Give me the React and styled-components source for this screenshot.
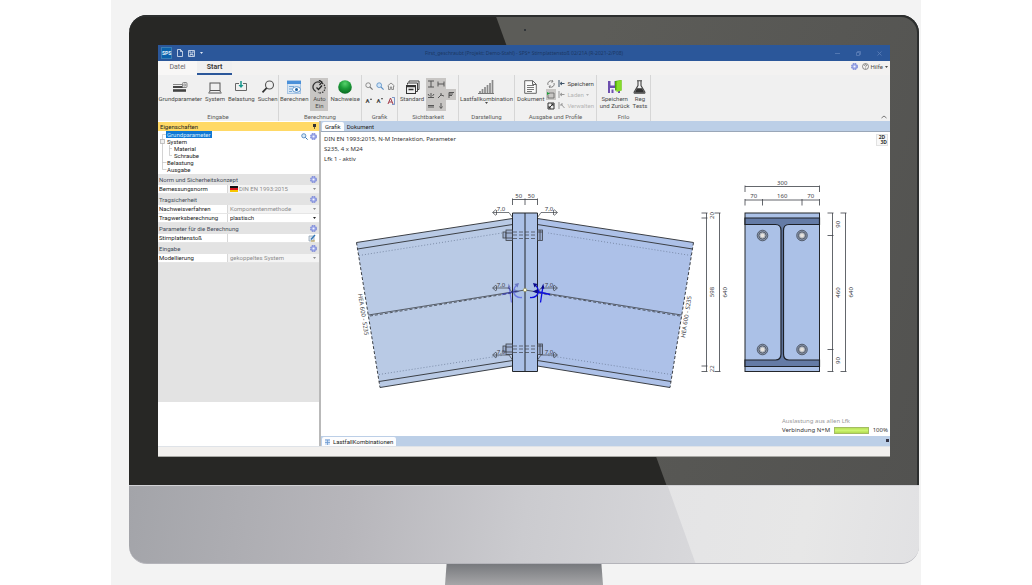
import React from 'react';
import styled, { createGlobalStyle } from 'styled-components';

const GlobalStyle = createGlobalStyle`
  * {
    box-sizing: border-box;
  }
  body {
    margin: 0;
    background: #fff;
    font-family: Roboto, 'Liberation Sans', sans-serif;
    font-size: 6px;
    line-height: 8px;
    color: #4a4a4a;
  }
  button,
  input,
  select {
    font: inherit;
    color: inherit;
    margin: 0;
    padding: 0;
    border: 0;
    border-radius: 0;
    background: none;
  }
  svg {
    display: block;
    flex: none;
  }
  ul {
    list-style: none;
    margin: 0;
    padding: 0;
  }
`;

/* monitor */

const PageStyles = styled.main`
  min-height: 100vh;
  padding: 0 111px;
  overflow: hidden;
`;

const Stage = styled.div`
  min-height: 100vh;
  padding: 15px 2px 0 18px;
  background: #f3f3f3;
`;

const Bezel = styled.div`
  position: relative;
  padding: 30px 29px 28px;
  border-radius: 18px 18px 0 0;
  background: #272725;
  box-shadow: inset -1px 1px 0 1px #2c2e2e;

  &::before {
    content: '';
    position: absolute;
    inset: 2px 2px 0 0;
    border-radius: 0 16px 0 0;
    background: linear-gradient(110deg, #5c5c58 50%, #525250);
    clip-path: polygon(46.6% 0, 100% 0, 100% 100%, 68.2% 100%);
  }
`;

const Camera = styled.span`
  position: absolute;
  top: 14px;
  left: 50%;
  width: 2px;
  height: 2px;
  border-radius: 50%;
  background: #252a30;
`;

const Chin = styled.div`
  position: relative;
  height: 79px;
  border-radius: 0 0 18px 18px;
  border-top: 1px solid #d2d2d6;
  border-bottom: 1px solid #b4b4ba;
  background: linear-gradient(98deg, #a3a4a9, #b7b6bb 28%, #cbcbcf 50%, #d8d8db 72%);
  overflow: hidden;

  &::before {
    content: '';
    position: absolute;
    inset: 0;
    background: linear-gradient(100deg, #e3e3e5 60%, #e7e7e7 85%, #e1e1e3);
    clip-path: polygon(68.2% 0, 100% 0, 100% 100%, 71.7% 100%);
  }
`;

const Stand = styled.div`
  width: 20%;
  height: 21px;
  margin: 0 auto;
  background: linear-gradient(#77797d, #a6a6a8);
  clip-path: polygon(1% 0, 99% 0, 100% 100%, 0 100%);
`;

const Screen = styled.div`
  position: relative;
  display: flex;
  flex-direction: column;
  background: #f0f0f0;
`;

/* title bar and tabs */

const TitleBar = styled.header`
  display: grid;
  grid-template-columns: 1fr auto 1fr;
  align-items: center;
  height: 16px;
  background: #2b579a;
`;

const Title = styled.h1`
  margin: 0;
  font-family: 'Noto Sans', sans-serif;
  font-size: 5px;
  font-weight: 400;
  color: #1c3764;
  white-space: nowrap;
`;

const TitleTools = styled.div`
  display: flex;
  align-items: center;
  justify-content: ${({ $end }) => ($end ? 'flex-end' : 'flex-start')};
  gap: ${({ $end }) => ($end ? '16px' : '5px')};
  padding: ${({ $end }) => ($end ? '0 8px' : '0 3px')};
  color: ${({ $end }) => ($end ? '#5d7fb8' : '#dfe7f4')};
`;

const IconButton = styled.button`
  display: flex;
  align-items: center;
  justify-content: center;
`;

const AppBadge = styled.span`
  padding: 1px 0;
  border: 1px solid #3b7fb5;
  background: #0c62ab;
  color: #e8f2fb;
  font-size: 5px;
  font-weight: 700;
  line-height: 8px;
`;

const TabRow = styled.nav`
  display: flex;
  height: 14px;
  background: #f3f2f1;
`;

const RibbonTab = styled.button`
  width: ${({ $active }) => ($active ? '35px' : '39px')};
  border-bottom: 2px solid ${({ $active }) => ($active ? '#2b579a' : 'transparent')};
  background: ${({ $active }) => ($active ? '#f0f0f0' : '#f8f7f6')};
  font-size: 7px;
  line-height: 12px;
  font-weight: ${({ $active }) => ($active ? 700 : 400)};
  color: ${({ $active }) => ($active ? '#3c3c3c' : '#6a6a6a')};
`;

const HelpArea = styled.div`
  display: flex;
  align-items: center;
  gap: 4px;
  margin-left: auto;
  padding: 0 2px 3px 0;
`;

const HelpButton = styled(IconButton)`
  gap: 2px;
`;

/* ribbon */

const Ribbon = styled.div`
  display: flex;
  height: 46px;
  background: #f0f0f0;
`;

const GroupBox = styled.section`
  display: flex;
  flex-direction: column;
  flex: 0 0 ${({ $width }) => $width}px;
  border-right: 1px solid #d6d6d6;

  h2 {
    margin: 0;
    font-size: 6px;
    font-weight: 400;
    line-height: 9px;
    text-align: center;
    white-space: nowrap;
    color: #5c5c5c;
  }
`;

const GroupBody = styled.div`
  display: flex;
  flex: 1;
  align-items: flex-start;
  justify-content: center;
  gap: ${({ $gap }) => $gap || 3}px;
  padding-top: 3px;
`;

const BigButton = styled.button`
  display: flex;
  flex-direction: column;
  align-items: center;
  min-width: ${({ $active }) => ($active ? '18px' : '0')};
  min-height: 33px;
  padding-top: 2px;
  background: ${({ $active }) => ($active ? '#c8c6c4' : 'none')};
  line-height: 7px;
  white-space: nowrap;

  svg {
    margin-bottom: 1px;
  }
`;

const SmallGrid = styled.div`
  display: grid;
  grid-template-columns: repeat(${({ $cols }) => $cols}, ${({ $size }) => $size || 10}px);
  grid-auto-rows: ${({ $row }) => $row || 11}px;
`;

const Toggle = styled(IconButton)`
  background: ${({ $active }) => ($active ? '#c8c6c4' : 'none')};
`;

const FontButton = styled(IconButton)`
  align-items: center;
  font-weight: 700;
  color: #444;
`;

const SideButton = styled.button`
  display: flex;
  align-items: center;
  gap: 2px;
  height: 11px;
  white-space: nowrap;
  color: ${({ disabled }) => (disabled ? '#b5b5b5' : '#444')};
`;

const Collapse = styled(IconButton)`
  align-self: flex-end;
  margin: 0 3px 2px auto;
`;

/* properties panel */

const Workspace = styled.div`
  display: flex;
`;

const Panel = styled.aside`
  display: flex;
  flex-direction: column;
  flex: 0 0 161px;
  padding-top: 1px;
  background: #fff;
  color: #222;
`;

const PanelHeader = styled.div`
  display: flex;
  align-items: center;
  justify-content: space-between;
  height: 9px;
  padding: 0 3px 0 2px;
  background: #ffd966;
`;

const TreeBox = styled.div`
  display: flex;
  justify-content: space-between;
  height: 43px;
  padding: 0 2px;
`;

const TreeLines = styled.svg`
  margin-right: -12px;
`;

const TreeList = styled.ul`
  flex: 1;

  li {
    display: flex;
    align-items: center;
    height: 7px;
  }
`;

const TreeItem = styled.button`
  margin-left: ${({ $level }) => ($level ? 13 : 6)}px;
  padding: 0 1px;
  line-height: 7px;
  background: ${({ $active }) => ($active ? '#0f78d4' : 'none')};
  color: ${({ $active }) => ($active ? '#d6e9fb' : '#222')};
`;

const TreeTools = styled.div`
  display: flex;
  gap: 2px;
  padding-top: 2px;
  align-items: flex-start;
`;

const Properties = styled.div`
  flex: 1;
  background: #e3e3e3;
`;

const SectionHeader = styled.div`
  display: flex;
  align-items: center;
  justify-content: space-between;
  height: 11px;
  padding: 0 2px 0 1px;
  color: #444b58;
`;

const PropertyRow = styled.div`
  display: grid;
  grid-template-columns: 69px 1fr;
  height: 9px;
  background: #fff;
  border-bottom: 1px solid #e6e6e6;

  label {
    padding-left: 1px;
    white-space: nowrap;
  }
`;

const FieldBox = styled.div`
  display: flex;
  align-items: center;
  gap: 1px;
  min-width: 0;
  padding: 0 3px 0 2px;
  border-left: 1px solid #d8d8d8;
  background: ${({ $off }) => ($off ? '#f4f4f4' : '#fff')};
  color: ${({ $off }) => ($off ? '#8d8d8d' : '#222')};

  select,
  input {
    flex: 1;
    min-width: 0;
    height: 8px;
    appearance: none;
    line-height: 8px;
    opacity: 1;
  }
`;

const PanelFooter = styled.div`
  height: 44px;
  background: #fff;
`;

/* document area */

const DocumentArea = styled.section`
  display: flex;
  flex: 1;
  flex-direction: column;
  min-width: 0;
  border-left: 2px solid #b9b9b9;
  background: #fff;
`;

const DockTabs = styled.div`
  display: flex;
  align-items: flex-end;
  justify-content: space-between;
  height: ${({ $bottom }) => ($bottom ? '10px' : '11px')};
  padding: 0 1px;
  background: #bccfe7;
  border-bottom: ${({ $bottom }) => ($bottom ? '0' : '1px solid #9aa7b8')};

  div {
    display: flex;
  }
`;

const DockTab = styled.button`
  display: flex;
  align-items: center;
  gap: 3px;
  height: 9px;
  padding: 0 3px;
  border-radius: 2px 2px 0 0;
  background: ${({ $active }) => ($active ? '#fdfdfe' : 'none')};
  color: #222;
`;

const Canvas = styled.div`
  padding: 2px 2px 1px 0;
  background: #fff;
  font-family: 'Noto Sans', sans-serif;
`;

const CanvasHead = styled.div`
  display: flex;
  justify-content: space-between;
  align-items: flex-start;
  padding-left: 3px;
  line-height: 10px;
  color: #333;

  p {
    margin: 0;
  }
`;

const ViewButton = styled.button`
  display: flex;
  flex-direction: column;
  width: 12px;
  height: 12px;
  border: 1px solid #e2e2e2;
  background: #f8f8f8;
  font-size: 5px;
  font-weight: 700;
  line-height: 5px;

  span:last-child {
    align-self: flex-end;
  }
`;

const Drawing = styled.svg`
  width: 100%;
  height: auto;
  font-size: 6px;
`;

const Usage = styled.div`
  width: 106px;
  margin-left: auto;
  line-height: 9px;
  white-space: nowrap;

  p {
    margin: 0;
    color: #9a9a9a;
  }
  div {
    display: flex;
    align-items: center;
    justify-content: space-between;
    color: #333;
  }
`;

const UsageBar = styled.span`
  width: 35px;
  height: 7px;
  border: 1px solid #a3bd62;
  background: linear-gradient(#b9e05b, #ccf46f 50%, #b2dc50);
`;

const StatusBar = styled.footer`
  height: 11px;
  border-top: 1px solid #dfe3e8;
  border-bottom: 1px solid #a8a8a4;
  background: #f2f0ee;
`;

/* icons */

const Icon = ({ w = 8, h = w, vw = w, vh = h, children, ...rest }) => (
  <svg
    width={w}
    height={h}
    viewBox={`0 0 ${vw} ${vh}`}
    fill="none"
    stroke="currentColor"
    aria-hidden="true"
    {...rest}
  >
    {children}
  </svg>
);

const Caret = () => (
  <Icon w={3} h={2}>
    <path d="M0 0h3L1.5 2z" fill="currentColor" stroke="none" />
  </Icon>
);

const Gear = ({ size = 7 }) => (
  <Icon w={size} h={size} vw={8} vh={8}>
    <circle cx="4" cy="4" r="3.2" fill="#aab5ec" stroke="#7482d6" strokeWidth="1.4" strokeDasharray="1.9 .6" />
    <circle cx="4" cy="4" r="1.5" fill="#f4f6ff" stroke="#8a97e0" strokeWidth=".7" />
  </Icon>
);

const Magnifier = ({ size = 8, color = '#777', fill = 'none' }) => (
  <Icon w={size} h={size} vw={8} vh={8} stroke={color}>
    <circle cx="3.2" cy="3.2" r="2.4" fill={fill} strokeWidth=".8" />
    <path d="M5 5l2.6 2.6" strokeWidth="1.1" />
  </Icon>
);

const ParameterIcon = () => (
  <Icon w={16} h={14}>
    <path d="M1 4.500h9" stroke="#888" />
    <path d="M1 7h11" stroke="#333" strokeWidth="1.800" />
    <path d="M1 10.500h13" stroke="#444" strokeWidth="2.600" />
    <rect x="10.500" y="2.500" width="4.500" height="5" rx="1" fill="#ddd" stroke="#888" />
    <circle cx="12.700" cy="5" r="1" stroke="#777" strokeWidth=".6" />
  </Icon>
);

const SystemIcon = () => (
  <Icon w={14} h={14}>
    <rect x="2" y="3" width="10" height="7.500" stroke="#555" />
    <path d="M.5 13h13M1 12.500l1.500-2M13 12.500l-1.500-2" stroke="#555" />
  </Icon>
);

const LoadIcon = () => (
  <Icon w={14} h={14}>
    <path d="M5 3.500H1.500v7h11v-7H9" stroke="#666" />
    <path d="M7 1v5" stroke="#18968c" strokeWidth="1.500" />
    <path d="M4.500 5h5L7 8z" fill="#18968c" stroke="none" />
  </Icon>
);

const SearchIcon = () => (
  <Icon w={14} h={14}>
    <circle cx="8.500" cy="5" r="4" stroke="#555" strokeWidth="1.100" />
    <path d="M5.600 8L1.500 12.300" stroke="#333" strokeWidth="1.800" />
  </Icon>
);

const CalcIcon = () => (
  <Icon w={16} h={14}>
    <rect x="1.500" y=".5" width="13" height="13" fill="#d6e6f5" stroke="#a9c6e5" />
    <path d="M1 2.500h14" stroke="#4a90d9" strokeWidth="3" />
    <path d="M3 6.500h5M3 9h3M3 11.500h3" stroke="#7aa9d8" />
    <ellipse cx="10.500" cy="9.500" rx="4" ry="2.800" fill="#fff" stroke="#3f83c6" strokeWidth=".8" />
    <circle cx="10.500" cy="9.500" r="1.500" fill="#1c5f9e" stroke="none" />
  </Icon>
);

const AutoIcon = () => (
  <Icon w={14} h={14}>
    <path d="M8 2.300A5 5 0 0 0 4 11.500" stroke="#333" strokeWidth="1.300" />
    <path d="M10 3.200A5 5 0 0 1 6 12.500" stroke="#333" strokeWidth="1.300" strokeDasharray="1.500 1" />
    <path d="M7 0l3 2.200L7.500 5M4.500 7.500l2 2 3.500-4" stroke="#222" strokeWidth="1.200" />
  </Icon>
);

const BallIcon = () => (
  <Icon w={14} h={14}>
    <defs>
      <radialGradient id="ball" cx="50%" cy="25%" r="75%">
        <stop offset="0" stopColor="#57d26c" />
        <stop offset=".5" stopColor="#1c9c38" />
        <stop offset="1" stopColor="#0c6a22" />
      </radialGradient>
    </defs>
    <circle cx="7" cy="7" r="6.800" fill="url(#ball)" stroke="none" />
  </Icon>
);

const StandardIcon = () => (
  <Icon w={15} h={14}>
    <path d="M4 2.500V1h10v8.500h-1.500" stroke="#444" />
    <path d="M2.500 4.500V3h10v8.500H11" stroke="#444" />
    <rect x="1.500" y="5.500" width="9" height="8" fill="#f0f0f0" stroke="#333" />
    <path d="M1.500 6.500h9M3.500 9.500h5" stroke="#333" strokeWidth="1.300" />
  </Icon>
);

const BarsIcon = () => (
  <Icon w={16} h={14}>
    <path d="M2 13v-2M4.500 13V9M7 13V7M9.500 13V5M12 13V3M14.500 13V0" stroke="#8a8a8a" strokeWidth="1.700" />
    <path d="M0 13.500h16" stroke="#777" />
  </Icon>
);

const DocumentIcon = () => (
  <Icon w={13} h={14}>
    <path d="M.7.7h8l3.600 3.600v9H.7zM8.500.7v3.800h3.800" fill="#fafafa" stroke="#666" />
    <path d="M3 5.500h7M3 7.500h7M3 9.500h7M3 11.500h5" stroke="#555" strokeWidth=".8" />
  </Icon>
);

const SaveBackIcon = () => (
  <Icon w={15} h={14}>
    <path d="M1 1h10l2 2v10H1z" fill="#6d4fae" stroke="none" />
    <path d="M3.500 1h4v4.500h-4zM3 8h8v5H3z" fill="#f1edf8" stroke="none" />
    <path d="M4.500 9.500h2V13h-2z" fill="#6d4fae" stroke="none" />
    <path d="M8 1l6.500-1v10.500H8z" fill="#4ea30e" stroke="none" />
    <path d="M9.500 1.500l5-1.500v10.500l-5 1.500z" fill="#86dd2a" stroke="none" />
  </Icon>
);

const FlaskIcon = () => (
  <Icon w={13} h={14}>
    <path d="M4 .8h5M5 1v4.500L1.200 12q-.5 1.300.8 1.300h9q1.300 0 .8-1.300L8 5.500V1" stroke="#444" strokeWidth="1.100" />
    <path d="M4 8.300h5l2.500 4.500h-10z" fill="#333" stroke="none" />
  </Icon>
);

/* ribbon content */

const Group = ({ title, width, gap, children }) => (
  <GroupBox $width={width}>
    <GroupBody $gap={gap}>{children}</GroupBody>
    <h2>{title}</h2>
  </GroupBox>
);

const Big = ({ icon, label, second, active }) => (
  <BigButton type="button" $active={active}>
    {icon}
    <span>{label}</span>
    {second && <span>{second}</span>}
  </BigButton>
);

const visibility = [
  ['Träger', 'M1 1h6M1 7h6M4 1v6'],
  ['Maße', 'M1 1.500v5M7 1.500v5M1 4h6'],
  null,
  ['Lasten', 'M1 6.500h6M4 6V2M2.500 5L1 3M5.500 5L7 3'],
  ['Schnitt', 'M1 7l3-3 3 1M4 4V2'],
  ['Fahne', 'M2 7V1.500h5M2 3h4M2 4.500h3'],
  ['Linie', 'M1 3.500h6M1 5h6'],
  ['Lager', 'M4 1v5M2.500 4.500L4 6.500l1.500-2'],
];

const RibbonContent = () => (
  <Ribbon>
    <Group title="Eingabe" width={121}>
      <Big icon={<ParameterIcon />} label="Grundparameter" />
      <Big icon={<SystemIcon />} label="System" />
      <Big icon={<LoadIcon />} label="Belastung" />
      <Big icon={<SearchIcon />} label="Suchen" />
    </Group>
    <Group title="Berechnung" width={83} gap={2}>
      <Big icon={<CalcIcon />} label="Berechnen" />
      <Big icon={<AutoIcon />} label="Auto" second="Ein" active />
      <Big icon={<BallIcon />} label="Nachweise" />
    </Group>
    <Group title="Grafik" width={36}>
      <SmallGrid $cols={3} $size={11} $row={15}>
        <IconButton aria-label="Zoom">
          <Magnifier />
        </IconButton>
        <IconButton aria-label="Vergrößern">
          <Magnifier color="#5b8fc4" fill="#cfe4f8" />
        </IconButton>
        <IconButton aria-label="Gesamtansicht">
          <Icon>
            <path d="M.5 4L4 1l3.500 3M1.500 4v3.500h1.800V5h1.400v2.500h1.800V4" stroke="#777" strokeWidth=".8" />
          </Icon>
        </IconButton>
        <FontButton>
          A
          <Icon w={2} h={5}>
            <path d="M0 2l1-2 1 2z" fill="#444" stroke="none" />
          </Icon>
        </FontButton>
        <FontButton>
          A
          <Icon w={2} h={5}>
            <path d="M0 0l1 2 1-2z" fill="#444" stroke="none" />
          </Icon>
        </FontButton>
        <IconButton aria-label="Schrift">
          <Icon>
            <path d="M1 7L3.500 1 6 7M2 5h3" stroke="#a23b4a" />
            <path d="M5 .5h2.500v7H5" stroke="#4a6fb5" strokeWidth=".7" />
          </Icon>
        </IconButton>
      </SmallGrid>
    </Group>
    <Group title="Sichtbarkeit" width={61} gap={2}>
      <Big icon={<StandardIcon />} label="Standard" />
      <SmallGrid $cols={3}>
        {visibility.map((item, i) =>
          item ? (
            <Toggle key={item[0]} aria-label={item[0]} $active>
              <Icon>
                <path d={item[1]} stroke="#555" />
              </Icon>
            </Toggle>
          ) : (
            <span key={i} />
          )
        )}
      </SmallGrid>
    </Group>
    <Group title="Darstellung" width={56}>
      <BigButton type="button">
        <BarsIcon />
        <span>Lastfallkombination</span>
        <Caret />
      </BigButton>
    </Group>
    <Group title="Ausgabe und Profile" width={82} gap={2}>
      <Big icon={<DocumentIcon />} label="Dokument" />
      <SmallGrid $cols={1}>
        <Toggle aria-label="Aktualisieren">
          <Icon>
            <path d="M1 5a3 3 0 0 1 4.500-3.600M7 3a3 3 0 0 1-4.500 3.600M5 0l1 1.500-1.500 1M3 8L2 6.500l1.500-1" stroke="#666" strokeWidth=".8" />
          </Icon>
        </Toggle>
        <Toggle aria-label="Ausschnitt" $active>
          <Icon>
            <path d="M2 2h5v5H1V4" stroke="#666" strokeWidth=".8" />
            <path d="M0 1l3 1.500L0 4z" fill="#1c9c38" stroke="none" />
          </Icon>
        </Toggle>
        <Toggle aria-label="Skalieren">
          <Icon>
            <path d="M1 1h6v6H1zM2 6l4-4M4 2h2v2M2 4v2h2" stroke="#333" />
          </Icon>
        </Toggle>
      </SmallGrid>
      <div>
        <SideButton>
          <Icon w={7} h={7}>
            <path d="M1 0v7M6.500 3.500h-4M4 2L2 3.500 4 5" stroke="#3d5368" />
          </Icon>
          Speichern
        </SideButton>
        <SideButton disabled>
          <Icon w={7} h={7}>
            <path d="M1 0v7M6.500 3.500h-4M4 2L2 3.500 4 5" stroke="#999" />
          </Icon>
          Laden <Caret />
        </SideButton>
        <SideButton disabled>
          <Icon w={7} h={7}>
            <path d="M1 0v7M3 2l3.500 4M3 4V2h2" stroke="#999" />
          </Icon>
          Verwalten
        </SideButton>
      </div>
    </Group>
    <Group title="Frilo" width={54}>
      <Big icon={<SaveBackIcon />} label="Speichern" second="und Zurück" />
      <Big icon={<FlaskIcon />} label="Reg" second="Tests" />
    </Group>
    <Collapse aria-label="Menüband reduzieren">
      <Icon w={6} h={4}>
        <path d="M.5 3L3 1l2.500 2" stroke="#777" />
      </Icon>
    </Collapse>
  </Ribbon>
);

/* properties content */

const treeItems = [
  { label: 'Grundparameter', active: true },
  { label: 'System' },
  { label: 'Material', level: 1 },
  { label: 'Schraube', level: 1 },
  { label: 'Belastung' },
  { label: 'Ausgabe' },
];

const sections = [
  {
    title: 'Norm und Sicherheitskonzept',
    rows: [{ id: 'norm', label: 'Bemessungsnorm', value: 'DIN EN 1993:2015', off: true, flag: true }],
  },
  {
    title: 'Tragsicherheit',
    rows: [
      { id: 'verfahren', label: 'Nachweisverfahren', value: 'Komponentenmethode', off: true },
      { id: 'berechnung', label: 'Tragwerksberechnung', value: 'plastisch' },
    ],
  },
  {
    title: 'Parameter für die Berechnung',
    rows: [{ id: 'stoss', label: 'Stirnplattenstoß', input: true }],
  },
  {
    title: 'Eingabe',
    rows: [{ id: 'modell', label: 'Modellierung', value: 'gekoppeltes System', off: true }],
  },
];

const Property = ({ id, label, value, off, flag, input }) => (
  <PropertyRow>
    <label htmlFor={id}>{label}</label>
    <FieldBox $off={off}>
      {flag && (
        <Icon w={8} h={6} stroke="none">
          <path d="M0 0h8v2H0z" fill="#111" />
          <path d="M0 2h8v2H0z" fill="#d8141c" />
          <path d="M0 4h8v2H0z" fill="#f7c600" />
        </Icon>
      )}
      {input ? (
        <>
          <input id={id} type="text" />
          <IconButton aria-label="Bearbeiten">
            <Icon>
              <path d="M1 2h5v5H1z" fill="#dfe8f2" stroke="#8899aa" strokeWidth=".7" />
              <path d="M3 5.500L7 1" stroke="#2e75b6" strokeWidth="1.300" />
              <path d="M3 7h4" stroke="#c7a64a" />
            </Icon>
          </IconButton>
        </>
      ) : (
        <>
          <select id={id} defaultValue={value}>
            <option>{value}</option>
          </select>
          <Caret />
        </>
      )}
    </FieldBox>
  </PropertyRow>
);

const PropertiesPanel = () => (
  <Panel>
    <PanelHeader>
      <span>Eigenschaften</span>
      <IconButton aria-label="Anheften">
        <Icon w={3} h={5}>
          <path d="M0 0h3v3H0z" fill="#333" stroke="none" />
          <path d="M1.500 3v2" stroke="#333" strokeWidth=".7" />
        </Icon>
      </IconButton>
    </PanelHeader>
    <TreeBox>
      <TreeLines width="12" height="42" fill="none" stroke="#b5b5b5" aria-hidden="true">
        <path d="M2.500 3.500v35M2.500 3.500h4M2.500 31.500h4M2.500 38.500h4M9.500 14v10.500M9.500 17.500h4M9.500 24.500h4" strokeWidth=".6" />
        <rect x=".5" y="8.500" width="4" height="4" fill="#eee" strokeWidth=".8" />
      </TreeLines>
      <TreeList>
        {treeItems.map((item) => (
          <li key={item.label}>
            <TreeItem $level={item.level} $active={item.active}>
              {item.label}
            </TreeItem>
          </li>
        ))}
      </TreeList>
      <TreeTools>
        <IconButton aria-label="Suchen">
          <Magnifier size={7} color="#2a6db0" fill="#d7e8f7" />
        </IconButton>
        <IconButton aria-label="Einstellungen">
          <Gear />
        </IconButton>
      </TreeTools>
    </TreeBox>
    <Properties>
      {sections.map((section) => (
        <React.Fragment key={section.title}>
          <SectionHeader>
            <span>{section.title}</span>
            <Gear />
          </SectionHeader>
          {section.rows.map((row) => (
            <Property key={row.id} {...row} />
          ))}
        </React.Fragment>
      ))}
    </Properties>
    <PanelFooter />
  </Panel>
);

/* joint drawing */

const INK = '#3c4046';

const Beam = ({ mirror, fill }) => (
  <g transform={mirror ? 'matrix(-1 0 0 1 1050 0)' : undefined} stroke={INK}>
    <path d="M356.500 242.500L512.500 218.500V366L380 387.500z" fill={fill} stroke="none" />
    <path d="M356.500 242.500L512.500 218.500M357.500 249L512.500 224.500M379 381.500L512.500 360.500M380 387.500L512.500 366" />
    <path d="M356.500 242.500L380 387.500" strokeDasharray="3 2" />
    <path d="M359 255.500L502 233M379 374.500L502 355.500" strokeWidth=".8" strokeDasharray="1 2" stroke="#6c7c98" />
    <path d="M368.500 315L525 290" strokeWidth=".8" />
    <path d="M370 316L512 293" strokeDasharray="3 2" strokeWidth=".8" />
  </g>
);

const Bolt = ({ y }) => (
  <g stroke={INK} strokeWidth=".8" fill="#8fa2c4" fillOpacity=".6">
    <rect x="503" y={y - 3} width="3" height="6" />
    <rect x="506" y={y - 5} width="6.500" height="10.500" />
    <rect x="537.500" y={y - 5} width="5" height="10.500" />
    <path d={`M506 ${y - 2}h6.500M506 ${y + 3}h6.500M537.500 ${y - 3}h5M540 ${y - 5}v10`} />
    <path d={`M513 ${y - 3}h25M513 ${y}h25M513 ${y + 3.5}h25`} strokeDasharray="4 2" strokeWidth=".7" />
  </g>
);

const Weld = ({ y }) => (
  <g stroke={INK} strokeWidth=".7" fill="none">
    {[false, true].map((right) => (
      <g key={String(right)} transform={right ? 'matrix(-1 0 0 1 1050 0)' : undefined}>
        <path d={`M493 ${y}H509L512.500 ${y + 5}M496 ${y - 3}L492.500 ${y}L496 ${y + 3}M496.500 ${y - 2.5}v5`} />
      </g>
    ))}
    <g fill={INK} stroke="none" textAnchor="middle">
      <text x="501" y={y - 1.5}>7,0</text>
      <text x="549" y={y - 1.5}>7,0</text>
    </g>
  </g>
);

const Forces = ({ mirror }) => (
  <g
    transform={mirror ? 'matrix(-1 0 0 1 1052 0)' : undefined}
    opacity={mirror ? 0.4 : 1}
    stroke="#0d0de0"
    strokeWidth="1.300"
    fill="none"
  >
    <path d="M530 297.500Q537 298 538.500 292Q538 287 535 285" />
    <path d="M533 283l4.500 1-3 3.500z" fill="#0a0a8c" stroke="none" />
    <path d="M540.500 302.500L543 286M550 294.500L537 291.500" />
    <path d="M541 288.500l2.300-5 1 5.200zM538 289l-5.500 2.500 5 2z" fill="#0a0a8c" stroke="none" />
  </g>
);

const HDim = ({ y, xs, labels }) => (
  <g>
    <path d={`M${xs[0]} ${y}H${xs[xs.length - 1]}`} stroke={INK} strokeWidth=".8" />
    {xs.map((x) => (
      <path key={x} d={`M${x} ${y - 1}v6.500`} stroke={INK} strokeWidth=".8" />
    ))}
    {labels.map((label, i) => (
      <text key={i} x={(xs[i] + xs[i + 1]) / 2} y={y - 2} textAnchor="middle">
        {label}
      </text>
    ))}
  </g>
);

const VDim = ({ x, ys, labels }) => (
  <g>
    <path d={`M${x} ${ys[0]}V${ys[ys.length - 1]}`} stroke={INK} strokeWidth=".8" />
    {ys.map((y) => (
      <path key={y} d={`M${x - 5} ${y}h6`} stroke={INK} strokeWidth=".8" />
    ))}
    {labels.map((label, i) => (
      <text
        key={i}
        transform={`translate(${x + 7} ${(ys[i] + ys[i + 1]) / 2}) rotate(-90)`}
        textAnchor="middle"
      >
        {label}
      </text>
    ))}
  </g>
);

const JointDrawing = () => (
  <Drawing viewBox="321 164 567 253" fill={INK} role="img" aria-label="Stirnplattenstoß">
    <Beam fill="#b9cae5" />
    <Beam fill="#adc1e8" mirror />
    <path d="M512.500 213h25v158.500h-25zM525 213v158.500" fill="#abc1e7" stroke="#23262b" />
    <path d="M512.500 292L525 290L537.500 292" fill="none" stroke={INK} strokeWidth=".8" />
    <Bolt y={235} />
    <Bolt y={349} />
    <Weld y={212.5} />
    <Weld y={288} />
    <Weld y={355} />
    <Forces mirror />
    <Forces />
    <circle cx="525" cy="290" r="1.700" fill="#fffde0" stroke="#8a8a4a" strokeWidth=".6" />
    <HDim y={199.5} xs={[512.5, 525, 537.5]} labels={['50', '50']} />
    <text transform="translate(358 294) rotate(81)">HEA 600 - S235</text>
    <text transform="translate(685 338) rotate(-81)">HEA 600 - S235</text>

    <rect x="745" y="213" width="74.500" height="158.500" fill="#abc1e7" stroke="#23262b" />
    <path
      d="M745 218h74.500v6.500h-30.500q-5.500 0-5.500 6v123.500q0 6 5.500 6h30.500v6.500H745v-6.500h30.500q5.500 0 5.500-6V230.500q0-6-5.500-6H745z"
      fill="#647ba6"
      stroke="#1d2127"
      strokeWidth="1.200"
    />
    {[
      [762.5, 235.5],
      [802, 235.5],
      [762.5, 349.5],
      [802, 349.5],
    ].map(([x, y]) => (
      <g key={`${x}-${y}`} stroke="#444b57" strokeWidth=".8">
        <circle cx={x} cy={y} r="5.300" fill="#8794ac" />
        <circle cx={x} cy={y} r="3.600" fill="#aeb4be" />
        <circle cx={x} cy={y} r="2" fill="#e6e2dc" stroke="none" />
      </g>
    ))}
    <HDim y={186.5} xs={[745, 819.5]} labels={['300']} />
    <HDim y={200} xs={[745, 762.5, 802, 819.5]} labels={['70', '160', '70']} />
    <VDim x={706.5} ys={[213, 218, 366, 371.5]} labels={['20', '598', '22']} />
    <VDim x={719.5} ys={[213, 371.5]} labels={['640']} />
    <VDim x={832.5} ys={[213, 235.5, 349.5, 371.5]} labels={['90', '460', '90']} />
    <VDim x={845.5} ys={[213, 371.5]} labels={['640']} />
  </Drawing>
);

const GraphicView = () => (
  <DocumentArea>
    <DockTabs>
      <div>
        <DockTab $active>Grafik</DockTab>
        <DockTab>Dokument</DockTab>
      </div>
    </DockTabs>
    <Canvas>
      <CanvasHead>
        <div>
          <p>DIN EN 1993:2015, N-M Interaktion, Parameter</p>
          <p>S235, 4 x M24</p>
          <p>Lfk 1 - aktiv</p>
        </div>
        <ViewButton>
          <span>2D</span>
          <span>3D</span>
        </ViewButton>
      </CanvasHead>
      <JointDrawing />
      <Usage>
        <p>Auslastung aus allen Lfk</p>
        <div>
          Verbindung N+M
          <UsageBar role="progressbar" aria-label="Verbindung N+M" aria-valuenow={100} />
          100%
        </div>
      </Usage>
    </Canvas>
    <DockTabs $bottom>
      <DockTab $active>
        <Icon w={5} h={6}>
          <path d="M0 0h5v6H0z" fill="#cfe0f5" stroke="none" />
          <path d="M0 1h5M0 3.500h5M2.500 1v5" stroke="#6f9bd1" strokeWidth=".8" />
        </Icon>
        LastfallKombinationen
      </DockTab>
      <Toggle aria-label="Liste">
        <Icon w={3} h={8}>
          <path d="M0 1h3v3H0z" fill="#334" stroke="none" />
        </Icon>
      </Toggle>
    </DockTabs>
  </DocumentArea>
);

export default function App() {
  return (
    <>
      <GlobalStyle />
      <PageStyles>
        <Stage>
          <Bezel>
            <Camera />
            <Screen>
              <TitleBar>
                <TitleTools>
                  <AppBadge>SPS</AppBadge>
                  <IconButton aria-label="Neu">
                    <Icon w={6} h={8}>
                      <path d="M.5.5h3l2 2v5h-5zM3.500.5v2h2" strokeWidth=".8" />
                    </Icon>
                  </IconButton>
                  <IconButton aria-label="Speichern">
                    <Icon w={7} h={7}>
                      <path d="M.5.5h6v6h-6zM2 .5V3h3V.5M2 6.500v-2h3v2" strokeWidth=".8" />
                    </Icon>
                  </IconButton>
                  <IconButton aria-label="Schnellzugriff">
                    <Caret />
                  </IconButton>
                </TitleTools>
                <Title>
                  First_geschraubt (Projekt: Demo-Stahl) - SPS+ Stirnplattenstoß 02/21A (R-2021-2/P08)
                </Title>
                <TitleTools $end>
                  <IconButton aria-label="Minimieren">
                    <Icon w={5} h={5}>
                      <path d="M0 2.500h5" strokeWidth=".8" />
                    </Icon>
                  </IconButton>
                  <IconButton aria-label="Verkleinern">
                    <Icon w={5} h={5}>
                      <path d="M.5 1.500h3v3h-3zM1.500 1.500v-1h3v3h-1" strokeWidth=".8" />
                    </Icon>
                  </IconButton>
                  <IconButton aria-label="Schließen">
                    <Icon w={5} h={5}>
                      <path d="M.5.5l4 4M4.500.5l-4 4" strokeWidth=".8" />
                    </Icon>
                  </IconButton>
                </TitleTools>
              </TitleBar>
              <TabRow>
                <RibbonTab>Datei</RibbonTab>
                <RibbonTab $active>Start</RibbonTab>
                <HelpArea>
                  <IconButton aria-label="Einstellungen">
                    <Gear />
                  </IconButton>
                  <HelpButton>
                    <Icon w={7} h={7}>
                      <circle cx="3.500" cy="3.500" r="3" strokeWidth=".6" />
                      <path d="M2.500 2.800q0-1.200 1-1.200t1 1q0 .6-1 1.200v.5M3.500 5v.7" strokeWidth=".6" />
                    </Icon>
                    Hilfe
                    <Caret />
                  </HelpButton>
                </HelpArea>
              </TabRow>
              <RibbonContent />
              <Workspace>
                <PropertiesPanel />
                <GraphicView />
              </Workspace>
              <StatusBar />
            </Screen>
          </Bezel>
          <Chin />
          <Stand />
        </Stage>
      </PageStyles>
    </>
  );
}
